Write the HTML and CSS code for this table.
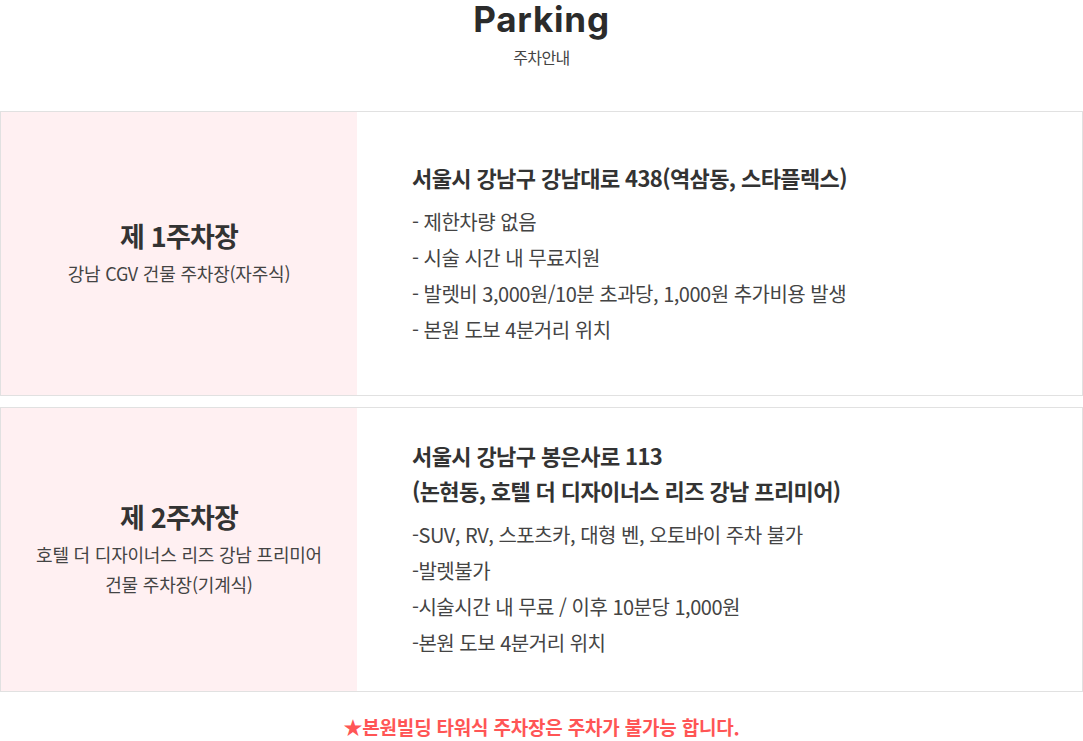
FILE: index.html
```html
<!DOCTYPE html>
<html lang="ko">
<head>
<meta charset="utf-8">
<link rel="stylesheet" href="styles.css">
</head>
<body>
<div class="page">
  <header class="head">
    <h1 class="title">Parking</h1>
    <p class="subtitle">주차안내</p>
  </header>
  <section class="box">
    <div class="side">
      <h2 class="side-title">제 1주차장</h2>
      <p class="side-desc">강남 CGV 건물 주차장(자주식)</p>
    </div>
    <div class="info">
      <h3 class="addr">서울시 강남구 강남대로 438(역삼동, 스타플렉스)</h3>
      <ul class="list">
        <li>- 제한차량 없음</li>
        <li>- 시술 시간 내 무료지원</li>
        <li>- 발렛비 3,000원/10분 초과당, 1,000원 추가비용 발생</li>
        <li>- 본원 도보 4분거리 위치</li>
      </ul>
    </div>
  </section>
  <section class="box">
    <div class="side">
      <h2 class="side-title">제 2주차장</h2>
      <p class="side-desc">호텔 더 디자이너스 리즈 강남 프리미어<br>건물 주차장(기계식)</p>
    </div>
    <div class="info">
      <h3 class="addr">서울시 강남구 봉은사로 113<br>(논현동, 호텔 더 디자이너스 리즈 강남 프리미어)</h3>
      <ul class="list">
        <li>-SUV, RV, 스포츠카, 대형 벤, 오토바이 주차 불가</li>
        <li>-발렛불가</li>
        <li>-시술시간 내 무료 / 이후 10분당 1,000원</li>
        <li>-본원 도보 4분거리 위치</li>
      </ul>
    </div>
  </section>
  <p class="notice">★본원빌딩 타워식 주차장은 주차가 불가능 합니다.</p>
</div>
</body>
</html>
```

FILE: styles.css
```css
* { box-sizing: border-box; }
html, body { margin: 0; padding: 0; background: #fff; }
body {
  font-family: "Noto Sans CJK KR", "Noto Sans", sans-serif;
  color: #333;
  letter-spacing: -0.6px;
}
.page { width: 1083px; }
.head { text-align: center; height: 111px; padding-top: 1px; }
.title {
  margin: 0;
  font-family: "Inter", "Noto Sans", sans-serif;
  font-weight: 700;
  font-size: 35px;
  line-height: 36px;
  letter-spacing: 0.8px;
  color: #2b2b2b;
}
.subtitle {
  margin: 10px 0 0;
  font-size: 16px;
  line-height: 20px;
  color: #444;
}
.box {
  display: flex;
  height: 285px;
  border: 1px solid #e1e1e1;
  margin-bottom: 11px;
}
.side {
  width: 356px;
  background: #fff0f2;
  display: flex;
  flex-direction: column;
  justify-content: center;
  align-items: center;
  text-align: center;
}
.side-title {
  margin: 0;
  font-size: 27px;
  font-weight: 700;
  line-height: 34px;
  letter-spacing: -0.8px;
  color: #333;
}
.side-desc {
  margin: 5px 0 0;
  font-size: 18px;
  line-height: 30px;
  letter-spacing: -0.2px;
  color: #444;
}
.info {
  flex: 1;
  padding-left: 55px;
  display: flex;
  flex-direction: column;
  justify-content: center;
}
.addr {
  margin: 0 0 9px;
  font-size: 22px;
  font-weight: 700;
  line-height: 35px;
  letter-spacing: -0.6px;
  color: #333;
}
.list {
  list-style: none;
  margin: 0;
  padding: 0;
}
.list li {
  font-size: 20px;
  line-height: 36px;
  letter-spacing: -0.5px;
  color: #444;
}
.notice {
  margin: 22px 0 0;
  text-align: center;
  font-size: 19px;
  line-height: 26px;
  font-weight: 700;
  letter-spacing: -0.2px;
  color: #ff5555;
}
```
